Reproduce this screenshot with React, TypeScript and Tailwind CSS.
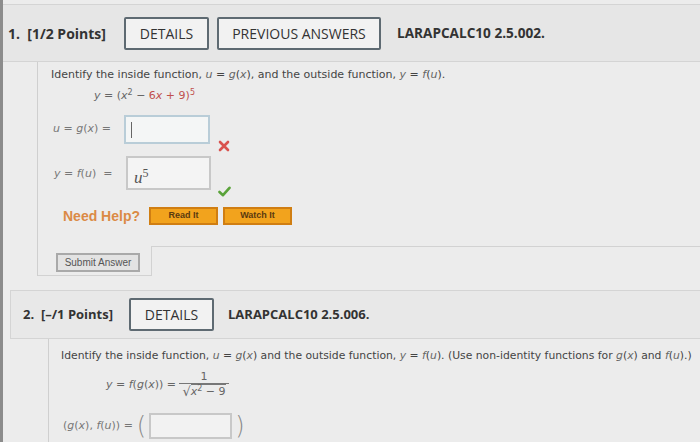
import React from "react";

const sans = { fontFamily: '"Open Sans", "Liberation Sans", sans-serif' };
const verdana = { fontFamily: '"DejaVu Sans", Verdana, sans-serif' };

function HeaderButton({ label, width }: { label: string; width: string }) {
  return (
    <div
      className={`${width} h-[33px] flex items-center justify-center border-2 border-[#5e6a72] rounded-[2px] bg-[#f2f2f2] text-[14px] text-[#333]`}
    >
      {label}
    </div>
  );
}

function XMark() {
  return (
    <svg width="12" height="12" viewBox="0 0 12 12">
      <path d="M2 2 L10 10 M10 2 L2 10" stroke="#d9534f" strokeWidth="2.6" strokeLinecap="round" />
    </svg>
  );
}

function Check() {
  return (
    <svg width="13" height="11" viewBox="0 0 13 11">
      <path d="M1.5 6 L5 9.2 L11.5 1.8" stroke="#5aa33a" strokeWidth="2.6" fill="none" strokeLinecap="round" strokeLinejoin="round" />
    </svg>
  );
}

export default function App() {
  return (
    <div
      className="w-[700px] h-[442px] overflow-hidden bg-[#ececec] border-l-[3px] border-[#8c8c8c] text-[#3a3a3a]"
      style={sans}
    >
      {/* Question 1 header */}
      <div className="mt-[4px] h-[58px] border-y border-[#d4d4d4] bg-[#e6e6e6] flex items-center pl-[5px]">
        <div className="w-[116px] text-[14px] font-bold text-[#333]">1.&nbsp; [1/2 Points]</div>
        <HeaderButton label="DETAILS" width="w-[85px]" />
        <div className="w-[8px]" />
        <HeaderButton label="PREVIOUS ANSWERS" width="w-[164px]" />
        <div className="ml-[16px] text-[13.6px] font-bold text-[#333]">LARAPCALC10 2.5.002.</div>
      </div>

      {/* Question 1 body */}
      <div className="ml-[34px] border-l border-[#cfcfcf]">
        <div className="pl-[13px] pt-[4px]" style={verdana}>
          <div className="text-[11px] leading-[18px] text-[#444] whitespace-nowrap">
            Identify the inside function, <i className="text-[#666]">u</i> = <i className="text-[#666]">g</i>(<i className="text-[#666]">x</i>), and the outside function, <i className="text-[#666]">y</i> = <i className="text-[#666]">f</i>(<i className="text-[#666]">u</i>).
          </div>
          <div className="pl-[43px] mt-[5px] text-[11px] text-[#666] leading-[14px]">
            <i>y</i> = (<i>x</i>
            <sup className="text-[8px]">2</sup> − <span className="text-[#c0504d]">6<i>x</i> + 9)</span>
            <sup className="text-[8px] text-[#c0504d]">5</sup>
          </div>

          {/* u = g(x) */}
          <div className="mt-[12px] h-[29px] flex items-start">
            <div className="w-[73px] pl-[2px] pt-[6px] text-[11px] text-[#777]">
              <i>u</i> = <i>g</i>(<i>x</i>) =
            </div>
            <div className="w-[86px] h-[29px] border-2 border-[#b9cdd8] bg-[#f4f6f6] pl-[5px] pt-[5px]">
              <div className="w-px h-[16px] bg-[#666]" />
            </div>
            <div className="ml-[8px] mt-[25px]">
              <XMark />
            </div>
          </div>

          {/* y = f(u) */}
          <div className="mt-[12px] h-[34px] flex items-start">
            <div className="w-[75px] pl-[3px] pt-[10px] text-[11px] text-[#777] whitespace-nowrap">
              <i>y</i> = <i>f</i>(<i>u</i>)&nbsp; =
            </div>
            <div className="w-[85px] h-[34px] border-2 border-[#c8c8c8] bg-[#f4f4f4] pl-[6px] pt-[7px]">
              <span className="text-[17px] italic text-[#555]" style={{ fontFamily: '"Liberation Serif", serif' }}>
                u
              </span>
              <sup className="text-[12px] text-[#555]" style={{ fontFamily: '"Liberation Serif", serif' }}>
                5
              </sup>
            </div>
            <div className="ml-[7px] mt-[30px]">
              <Check />
            </div>
          </div>

          {/* Need help */}
          <div className="mt-[17px] h-[18px] flex items-center" style={{ fontFamily: '"Liberation Sans", Arial, sans-serif' }}>
            <div className="ml-[12px] w-[86px] text-[14px] font-bold text-[#db8a45]">Need Help?</div>
            <div className="w-[69px] h-[18px] bg-[#f2a31d] border-2 border-[#d07e12] flex items-center justify-center text-[9px] font-bold text-[#5a3a10]">
              Read It
            </div>
            <div className="ml-[5px] w-[69px] h-[18px] bg-[#f2a31d] border-2 border-[#d07e12] flex items-center justify-center text-[9px] font-bold text-[#5a3a10]">
              Watch It
            </div>
          </div>
        </div>

        {/* submit tab */}
        <div className="mt-[21px] flex">
          <div className="w-[114px] h-[30px] border-r border-b border-[#d2d2d2] pl-[18px] pt-[7px]">
            <div
              className="w-[84px] h-[19px] border-2 border-[#a9a9a9] bg-[#e3e3e3] flex items-center justify-center text-[10px] text-[#555]"
              style={{ fontFamily: '"Liberation Sans", Arial, sans-serif' }}
            >
              Submit Answer
            </div>
          </div>
          <div className="flex-1 border-t border-[#d2d2d2]" />
        </div>
      </div>

      {/* Question 2 header */}
      <div className="mt-[14px] ml-[7px] h-[49px] border-y border-l border-[#d4d4d4] bg-[#e8e8e8] flex items-center pl-[12px]">
        <div className="w-[106px] text-[13px] font-bold text-[#333]">2.&nbsp; [–/1 Points]</div>
        <HeaderButton label="DETAILS" width="w-[85px]" />
        <div className="ml-[14px] text-[13px] font-bold text-[#333]">LARAPCALC10 2.5.006.</div>
      </div>

      {/* Question 2 body */}
      <div className="ml-[45px] border-l border-[#cfcfcf] pl-[12px] pt-[8px] h-[120px]" style={verdana}>
        <div className="text-[10.8px] leading-[18px] text-[#444] whitespace-nowrap">
          Identify the inside function, <i className="text-[#666]">u</i> = <i className="text-[#666]">g</i>(<i className="text-[#666]">x</i>) and the outside function, <i className="text-[#666]">y</i> = <i className="text-[#666]">f</i>(<i className="text-[#666]">u</i>). (Use non-identity functions for <i className="text-[#666]">g</i>(<i className="text-[#666]">x</i>) and <i className="text-[#666]">f</i>(<i className="text-[#666]">u</i>).)
        </div>

        <div className="mt-[6px] ml-[45px] flex items-center text-[11px] text-[#666]">
          <div className="mr-[3px]">
            <i>y</i> = <i>f</i>(<i>g</i>(<i>x</i>)) =
          </div>
          <div className="flex flex-col items-center">
            <div className="leading-[12px]">1</div>
            <div className="w-[50px] h-px bg-[#777]" />
            <div className="flex items-end leading-[14px]">
              <span className="text-[13px]">√</span>
              <span className="border-t border-[#777]">
                <i>x</i>
                <sup className="text-[8px]">2</sup> − 9
              </span>
            </div>
          </div>
        </div>

        <div className="mt-[14px] ml-[2px] h-[26px] flex items-center text-[11px] text-[#777]">
          <div className="mr-[4px] whitespace-nowrap">
            (<i>g</i>(<i>x</i>), <i>f</i>(<i>u</i>)) =
          </div>
          <span className="text-[24px] font-light text-[#888] leading-none">(</span>
          <div className="mx-[3px] w-[83px] h-[26px] border-2 border-[#c8c8c8] bg-[#f2f2f2]" />
          <span className="text-[24px] font-light text-[#888] leading-none">)</span>
        </div>
      </div>
    </div>
  );
}
